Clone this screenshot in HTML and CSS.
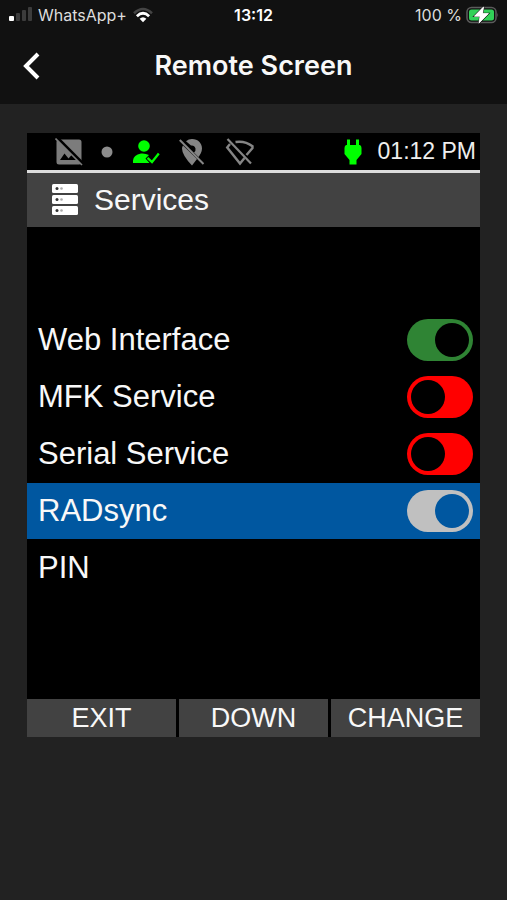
FILE: index.html
```html
<!DOCTYPE html>
<html lang="en">
<head>
<meta charset="utf-8">
<meta name="viewport" content="width=device-width, initial-scale=1">
<title>Remote Screen</title>
<link rel="stylesheet" href="styles.css">
</head>
<body>
<header class="top">
  <div class="phone-status">
    <div class="carrier">
      <svg width="24" height="16" viewBox="0 0 24 16" aria-hidden="true">
        <rect x="1" y="9" width="5" height="5" rx="1" fill="#fff"/>
        <rect x="8" y="6" width="4" height="8" rx="1" fill="#3c3c3c"/>
        <rect x="14" y="3" width="4" height="11" rx="1" fill="#3c3c3c"/>
        <rect x="20" y="0" width="4" height="14" rx="1" fill="#3c3c3c"/>
      </svg>
      <span>WhatsApp+</span>
      <svg width="20" height="16" viewBox="0 0 20 16" aria-hidden="true">
        <path d="M1 6.2Q10-2.2 19 6.2" fill="none" stroke="#444" stroke-width="2.6"/>
        <path d="M3.9 9.2Q10 3.4 16.1 9.2" fill="none" stroke="#fff" stroke-width="2.8"/>
        <path d="M6.6 11.8Q10 8.8 13.4 11.8L10 15.2Z" fill="#fff"/>
      </svg>
    </div>
    <time class="clock">13:12</time>
    <div class="power">
      <span>100 %</span>
      <svg width="33" height="18" viewBox="0 0 33 18" aria-hidden="true">
        <rect x="1" y="1.5" width="29" height="15" rx="4.5" fill="none" stroke="#5c5c5c" stroke-width="1.5"/>
        <path d="M31.3 6.5Q33 9 31.3 11.5Z" fill="#5c5c5c"/>
        <rect x="3" y="3.5" width="25" height="11" rx="2.5" fill="#31d158"/>
        <path d="M17.6.8 8.3 10.3H14L12.9 17.2 22.5 7.5H16.6Z" fill="#fff" stroke="#111" stroke-width="1.6" paint-order="stroke"/>
        <path d="M17.6.8 8.3 10.3H14L12.9 17.2 22.5 7.5H16.6Z" fill="#fff" stroke="#fff" stroke-width=".6"/>
      </svg>
    </div>
  </div>
  <div class="nav">
    <button class="back" type="button" aria-label="Back">
      <svg width="18" height="28" viewBox="0 0 18 28" aria-hidden="true"><path d="M16 2 4 14 16 26" fill="none" stroke="#fff" stroke-width="4"/></svg>
    </button>
    <h1>Remote Screen</h1>
  </div>
</header>
<main>
  <section class="device" aria-label="Device screen">
    <div class="indicators">
      <svg class="i-image" width="28" height="28" viewBox="0 0 28 28" aria-hidden="true">
        <path fill="#7c7c7c" fill-rule="evenodd" d="M4 1.500H24Q26.500 1.500 26.500 4V24Q26.500 26.500 24 26.500H4Q1.500 26.500 1.500 24V4Q1.500 1.500 4 1.500ZM5 22H21.500L17 16.500 13.500 20.500 9.500 15.500Z"/>
        <path d="M2-.5 29 26.500" stroke="#000" stroke-width="3"/>
        <path d="m.5.5 26.500 26.500" stroke="#7c7c7c" stroke-width="1.600"/>
      </svg>
      <svg class="i-dot" width="12" height="12" viewBox="0 0 12 12" aria-hidden="true"><circle cx="6" cy="6" r="5.5" fill="#8c8c8c"/></svg>
      <svg class="i-user" width="28" height="26" viewBox="0 0 28 26" aria-hidden="true">
        <circle cx="12" cy="7" r="5.8" fill="#0f0"/>
        <path d="M1 24V21.5Q1.500 16 9 14.500 13 14 17 16L13.500 19.500 17.500 24Z" fill="#0f0"/>
        <path d="m15.500 18.800 4.500 4.200 6.800-8.500" fill="none" stroke="#0f0" stroke-width="2.300"/>
      </svg>
      <svg class="i-pin" width="26" height="28" viewBox="0 0 26 28" aria-hidden="true">
        <path fill="#858585" d="M13 1C19 1 23 5.200 23 10.500 23 14 21 17 19.500 19L15 14.500Q17 13 16.500 10.500 15.500 7 12 7.500L7 3.200Q9.500 1 13 1ZM4 7.500 18 21 13 27.500Q3 17 3 10.500Q3 9 4 7.500Z"/>
        <path d="M.8 2 24.500 26" stroke="#858585" stroke-width="2"/>
      </svg>
      <svg class="i-wifi" width="30" height="28" viewBox="0 0 30 28" aria-hidden="true">
        <path d="M5 6 2.200 9.500 15 25.500 19.500 20M10.500 4Q20 2.500 27.500 8.200V10L21.500 17" fill="none" stroke="#858585" stroke-width="2.400"/>
        <path d="M2.500 1 26 25.500" stroke="#858585" stroke-width="2.200"/>
      </svg>
      <svg class="i-plug" width="18" height="26" viewBox="0 0 18 26" aria-hidden="true">
        <path d="M3 .5H6V6H12V.5H15V6H16Q17.500 7 17.500 9V15L12.500 21V25.500H5.500V21L.5 15V9Q.5 7 2 6H3Z" fill="#0f0"/>
      </svg>
      <time>01:12 PM</time>
    </div>
    <div class="title">
      <svg width="26" height="32" viewBox="0 0 26 32" aria-hidden="true">
        <g fill="#fff"><rect width="26" height="9" rx="1.5"/><rect y="11" width="26" height="9" rx="1.5"/><rect y="22" width="26" height="9" rx="1.5"/></g>
        <g fill="#333"><circle cx="5" cy="4.5" r="1.5"/><circle cx="5" cy="15.5" r="1.5"/><circle cx="5" cy="26.5" r="1.5"/></g>
        <g fill="#aaa"><circle cx="9.5" cy="4.5" r="1.3"/><circle cx="9.5" cy="15.5" r="1.3"/><circle cx="9.5" cy="26.5" r="1.3"/></g>
      </svg>
      <h2>Services</h2>
    </div>
    <div class="services">
      <label class="row"><span>Web Interface</span><input type="checkbox" checked></label>
      <label class="row"><span>MFK Service</span><input type="checkbox"></label>
      <label class="row"><span>Serial Service</span><input type="checkbox"></label>
      <label class="row selected"><span>RADsync</span><input type="checkbox" checked></label>
      <div class="row"><span>PIN</span></div>
    </div>
    <div class="softkeys">
      <button type="button">EXIT</button>
      <button type="button">DOWN</button>
      <button type="button">CHANGE</button>
    </div>
  </section>
</main>
</body>
</html>
```
FILE: styles.css
```css
* { box-sizing: border-box; }
body {
  margin: 0;
  min-height: 100vh;
  background: #222;
  color: #f8f8f8;
  font-family: "Liberation Sans", Arial, sans-serif;
}
svg { display: block; flex: none; }
button {
  border: 0;
  padding: 0;
  color: inherit;
  font: inherit;
  cursor: pointer;
}
.top {
  height: 104px;
  background: #111;
  font-family: Inter, sans-serif;
}
.phone-status {
  display: grid;
  grid-template-columns: 1fr auto 1fr;
  align-items: center;
  height: 30px;
  padding: 0 8px;
  font-size: 16px;
  color: #ddd;
}
.carrier, .power { display: flex; align-items: center; }
.carrier { gap: 6px; }
.clock { color: #fff; font-weight: 600; }
.power { justify-content: flex-end; gap: 4px; }
.nav {
  display: grid;
  grid-template-columns: 48px 1fr 48px;
  align-items: center;
  height: 72px;
}
.back {
  display: flex;
  justify-content: flex-end;
  padding-right: 8px;
  background: none;
}
h1, h2 { margin: 0; }
h1 {
  text-align: center;
  font-size: 27px;
  font-weight: 600;
  line-height: 32px;
}
main { padding: 29px 27px 0; }
.device { background: #000; }
.indicators {
  display: flex;
  align-items: center;
  height: 40px;
  padding: 0 4px 0 28px;
  border-bottom: 3px solid #ddd;
  font-size: 23px;
}
.i-dot { margin-left: 18px; }
.i-user { margin-left: 19px; }
.i-pin { margin-left: 19px; }
.i-wifi { margin-left: 20px; }
.i-plug { margin-left: auto; }
.indicators time { margin-left: 16px; color: #eee; }
.title {
  display: flex;
  align-items: center;
  gap: 16px;
  height: 54px;
  padding-left: 25px;
  background: #424242;
}
h2 { font-size: 30px; font-weight: 400; }
.services {
  display: grid;
  gap: 1px;
  padding: 85px 0 103px;
  font-size: 31px;
}
.row {
  display: flex;
  align-items: center;
  justify-content: space-between;
  height: 56px;
  padding: 0 7px 0 11px;
}
.selected { background: #0057a0; }
.row input {
  appearance: none;
  display: flex;
  align-items: center;
  width: 66px;
  height: 42px;
  margin: 0;
  padding: 0 4px;
  border-radius: 21px;
  background: #f00;
}
.row input::before {
  content: "";
  width: 34px;
  height: 34px;
  border-radius: 50%;
  background: #000;
}
.row input:checked {
  justify-content: flex-end;
  background: #2f8434;
}
.selected input:checked { background: #c0c0c0; }
.row.selected input::before { background: #0057a0; }
.softkeys {
  display: grid;
  grid-template-columns: repeat(3, 1fr);
  gap: 3px;
}
.softkeys button {
  height: 38px;
  background: #424242;
  font-size: 27px;
}
```
